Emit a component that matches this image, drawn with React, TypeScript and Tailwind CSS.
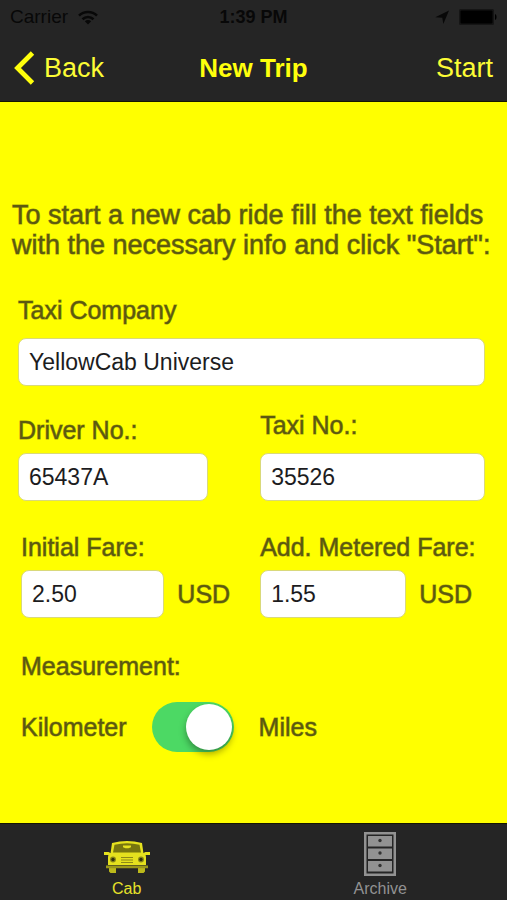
import { useState } from "react";
import type { ReactNode } from "react";

const textStyle = "block leading-[30px] text-[#5c5910] [-webkit-text-stroke:1px_#5c591099]";

const labelStyle = `${textStyle} text-[25px]`;

const inputStyle =
  "block h-12 w-full min-w-0 rounded-lg border border-[#d9d97a] bg-white px-[10px] text-[23px] text-[#1c1c1e] outline-none";

function StatusBar() {
  return (
    <div className="grid h-[34px] grid-cols-3 items-center px-[10px] text-[19px] text-[#080808]">
      <div className="flex items-center gap-[10px]">
        <span>Carrier</span>
        <svg width="20" height="15" viewBox="0 0 20 15" fill="none" stroke="currentColor" strokeWidth="2.6" aria-hidden="true">
          <path d="M1 5.6C6 .7 14 .7 19 5.6" />
          <path d="M4.5 9.2c3.200-3 7.800-3 11 0" />
          <path d="M10 14.500L6.800 11.300c1.800-1.700 4.600-1.700 6.400 0z" fill="currentColor" stroke="none" />
        </svg>
      </div>
      <span className="text-center text-lg font-bold">1:39 PM</span>
      <div className="flex items-center justify-end gap-[10px]">
        <svg width="14" height="15" viewBox="0 0 14 15" fill="currentColor" aria-hidden="true">
          <path d="M14 .5L8.300 14 7.300 7.700.300 7.200z" />
        </svg>
        <svg width="38" height="16" viewBox="0 0 38 16" aria-hidden="true">
          <rect width="35" height="16" rx="1.500" fill="#151515" />
          <rect x="1.500" y="1.500" width="32" height="13" rx="1" fill="#000" />
          <path d="M36 5c2 .5 2 5.500 0 6z" fill="#000" />
        </svg>
      </div>
    </div>
  );
}

function NavBar() {
  return (
    <nav className="flex h-[67px] items-center justify-between px-[14px] text-[27px] leading-8 text-[#fcfc35]">
      <div className="flex flex-1">
        <button type="button" className="flex items-center gap-[9px]">
          <svg width="21" height="34" viewBox="0 0 21 34" fill="none" stroke="#ffff0c" strokeWidth="4.800" aria-hidden="true">
            <path d="M18.500 2L3.500 17l15 15" />
          </svg>
          Back
        </button>
      </div>
      <h1 className="text-[26px] font-bold text-[#ffff0c]">New Trip</h1>
      <div className="flex flex-1 justify-end">
        <button type="button">Start</button>
      </div>
    </nav>
  );
}

type FieldProps = {
  id: string;
  label: string;
  initial: string;
  className?: string;
  raised?: boolean;
};

function Field({ id, label, initial, className = "", raised = false }: FieldProps) {
  const [value, setValue] = useState(initial);
  return (
    <div className={`min-w-0 ${className}`}>
      <label htmlFor={id} className={`${labelStyle} ${raised ? "mb-[13px]" : "mb-2"}`}>
        {label}
      </label>
      <input id={id} type="text" value={value} onChange={(e) => setValue(e.target.value)} className={inputStyle} />
    </div>
  );
}

function FareField({ id, label, initial, className = "" }: FieldProps) {
  const [value, setValue] = useState(initial);
  return (
    <div className={`min-w-0 ${className}`}>
      <label htmlFor={id} className={`${labelStyle} mb-2 whitespace-nowrap`}>
        {label}
      </label>
      <div className="flex items-center gap-[13px]">
        <div className="min-w-0 flex-1">
          <input id={id} type="text" value={value} onChange={(e) => setValue(e.target.value)} className={inputStyle} />
        </div>
        <span className={labelStyle}>USD</span>
      </div>
    </div>
  );
}

function UnitSwitch() {
  const [miles, setMiles] = useState(true);
  return (
    <fieldset className="mt-[33px] pl-[3px]">
      <legend className={labelStyle}>Measurement:</legend>
      <div className="mt-[21px] flex items-center">
        <span className={labelStyle}>Kilometer</span>
        <label className="mx-[25px] flex h-[50px] w-[82px] cursor-pointer rounded-full bg-[#e5e5ea] p-[2px] has-checked:justify-end has-checked:bg-[#4cd964]">
          <input
            type="checkbox"
            role="switch"
            aria-label="Use miles"
            checked={miles}
            onChange={(e) => setMiles(e.target.checked)}
            className="size-[46px] cursor-pointer appearance-none rounded-full bg-white shadow-[0_4px_7px_rgba(0,0,0,0.35)]"
          />
        </label>
        <span className={labelStyle}>Miles</span>
      </div>
    </fieldset>
  );
}

function CabIcon() {
  return (
    <svg width="46" height="36" viewBox="0 0 46 36" aria-hidden="true">
      <path d="M5 26h7v7H6.500L5 31.500zM34 26h7v5.500L39.500 33H34z" fill="#bcb91b" />
      <path d="M6.500 13.500L8 3Q23-1.200 38 3l1.500 10.500 2.500 3V25H4v-8.500z" fill="#e5e11e" />
      <path d="M9 12.500L10.500 4.800q12.500-3 25 0L37 12.500z" fill="#77750f" />
      <path d="M19 5.500h8v1.800l-2.500 1h-3l-2.500-1z" fill="#e5e11e" />
      <path d="M0 12h4.500l3 1.500v3H5l-1-1.500H0zM46 12h-4.500l-3 1.500v3H41l1-1.500h4z" fill="#e5e11e" />
      <circle cx="9" cy="19.500" r="3" fill="#8c8917" />
      <circle cx="37" cy="19.500" r="3" fill="#8c8917" />
      <circle cx="9" cy="19.500" r="1.700" fill="#30300f" />
      <circle cx="37" cy="19.500" r="1.700" fill="#30300f" />
      <path d="M17 17.500h12M17 20h12M17 22.500h12" stroke="#8c8917" strokeWidth="1.200" />
      <path d="M2 25.600h42v2.600H2z" fill="#9b981b" />
    </svg>
  );
}

function ArchiveIcon() {
  return (
    <svg width="32" height="44" viewBox="0 0 32 44" aria-hidden="true">
      <path d="M0 0h32v44H0z" fill="#929292" />
      <path d="M2.500 2.500h27v39h-27z" fill="#252525" />
      <path d="M4 4h24v10.500H4zM4 16.500h24V27H4zM4 29h24v10.500H4z" fill="#929292" />
      <circle cx="16" cy="8.500" r="1.700" fill="#333" />
      <circle cx="16" cy="21" r="1.700" fill="#333" />
      <circle cx="16" cy="33.500" r="1.700" fill="#333" />
    </svg>
  );
}

function Tab({ label, color, children }: { label: string; color: string; children: ReactNode }) {
  return (
    <button type="button" className={`flex flex-col items-center ${color}`}>
      <span className="flex h-[44px] items-end">{children}</span>
      <span className="mt-[3px] text-base leading-5">{label}</span>
    </button>
  );
}

export default function App() {
  return (
    <div className="flex min-h-screen flex-col bg-[#ffff00] font-['Liberation_Sans',Arial,sans-serif]">
      <header className="border-b border-[#161600] bg-[#252525]">
        <StatusBar />
        <NavBar />
      </header>

      <main className="flex-1 pt-[98px] pr-[22px] pb-10 pl-[18px]">
        <p className={`${textStyle} -mr-3 -ml-[6px] text-[27px]`}>
          To start a new cab ride fill the text fields with the necessary info and click "Start":
        </p>
        <form className="mt-[35px]" onSubmit={(e) => e.preventDefault()}>
          <Field id="company" label="Taxi Company" initial="YellowCab Universe" raised />
          <div className="mt-6 grid grid-cols-[14fr_13fr] items-end">
            <Field id="driver" label="Driver No.:" initial="65437A" className="pr-[52px]" />
            <Field id="taxi" label="Taxi No.:" initial="35526" raised />
          </div>
          <div className="mt-[31px] grid grid-cols-[14fr_13fr]">
            <FareField id="initial-fare" label="Initial Fare:" initial="2.50" className="pr-[30px] pl-[3px]" />
            <FareField id="metered-fare" label="Add. Metered Fare:" initial="1.55" className="pr-[13px]" />
          </div>
          <UnitSwitch />
        </form>
      </main>

      <footer className="grid h-[77px] grid-cols-2 border-t border-[#161600] bg-[#252525] pt-2">
        <Tab label="Cab" color="text-[#e5e12a]">
          <CabIcon />
        </Tab>
        <Tab label="Archive" color="text-[#929292]">
          <ArchiveIcon />
        </Tab>
      </footer>
    </div>
  );
}
